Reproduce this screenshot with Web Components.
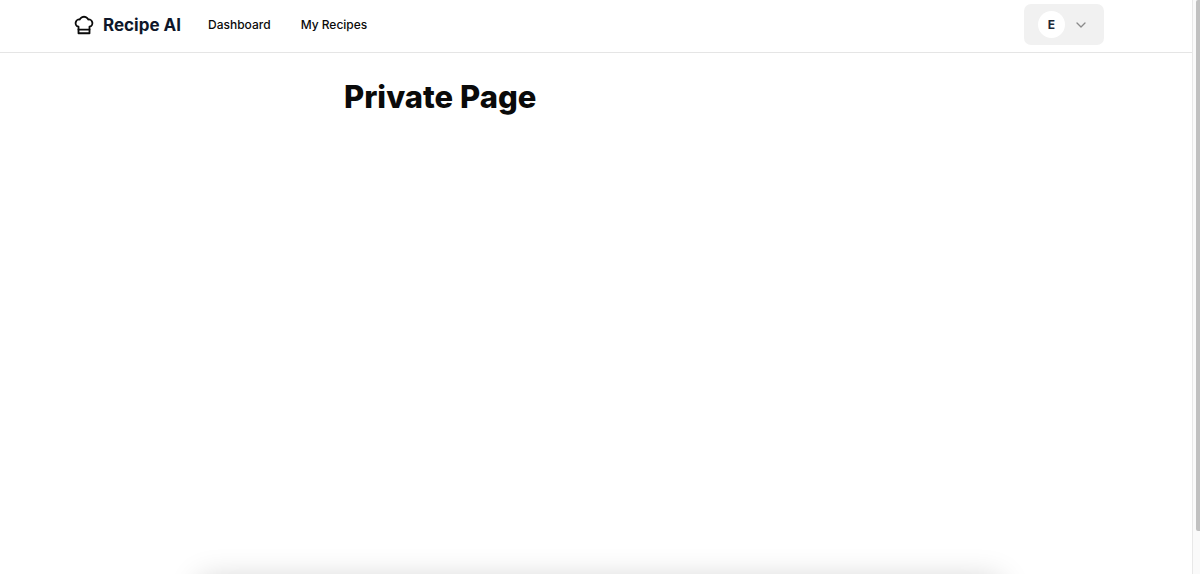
<!DOCTYPE html>
<html lang="en">
<head>
<meta charset="utf-8">
<meta name="viewport" content="width=device-width, initial-scale=1">
<title>Recipe AI</title>
<style>
body { margin: 0; background: #fff; color: #0a0a0a; font-family: Inter, "Liberation Sans", sans-serif; }
</style>
</head>
<body>
<app-shell>
  <site-header slot="header">
    <brand-link slot="brand">Recipe AI</brand-link>
    <nav-link to="#dashboard">Dashboard</nav-link>
    <nav-link to="#recipes">My Recipes</nav-link>
    <user-menu slot="account" initial="E"></user-menu>
  </site-header>
  <page-title>Private Page</page-title>
</app-shell>
<script>
const define = (name, html, setup) => {
  const template = document.createElement('template');
  template.innerHTML = html;
  customElements.define(name, class extends HTMLElement {
    constructor() {
      super();
      this.attachShadow({ mode: 'open' }).append(template.content.cloneNode(true));
    }
    connectedCallback() { if (setup) setup(this, this.shadowRoot); }
  });
};

define('app-shell', `
<style>
:host { display: flex; height: 100vh; overflow: hidden; }
.page { flex: 1; min-width: 0; display: flex; flex-direction: column; }
main { flex: 1; padding: 24px; }
.dock { flex: none; height: 40px; margin: 0 192px 0 200px; margin-bottom: -46px; box-shadow: 0 0 32px rgba(0,0,0,.2); }
</style>
<div class="page">
  <slot name="header"></slot>
  <main><slot></slot></main>
  <div class="dock"></div>
</div>
<scroll-rail></scroll-rail>`);

define('scroll-rail', `
<style>
:host { display: flex; justify-content: flex-end; box-sizing: border-box; flex: none; width: 8px; border-left: 1px solid #e8e8e8; background: #fafafa; }
.thumb { width: 4px; height: 92.5%; background: #c1c1c1; border-radius: 2px 0 0 2px; }
</style>
<div class="thumb"></div>`);

define('site-header', `
<style>
:host { display: block; border-bottom: 1px solid #e5e5e5; }
header { display: flex; align-items: center; padding: 4px 88px 7px 73px; }
nav { display: flex; gap: 30px; margin-left: 27px; }
.account { margin-left: auto; }
</style>
<header>
  <slot name="brand"></slot>
  <nav aria-label="Main"><slot></slot></nav>
  <div class="account"><slot name="account"></slot></div>
</header>`);

define('brand-link', `
<style>
:host { display: block; }
a { display: flex; align-items: center; gap: 8px; color: #0f172a; font-size: 17px; line-height: 26px; font-weight: 700; text-decoration: none; }
svg { display: block; width: 22px; height: 22px; color: #0a0a0a; }
</style>
<a href="#home">
  <svg viewBox="0 0 24 24" fill="none" stroke="currentColor" stroke-width="2" stroke-linecap="round" stroke-linejoin="round" aria-hidden="true">
    <path d="M6 13.87A4 4 0 0 1 7.41 6a5.11 5.11 0 0 1 1.05-1.54 5 5 0 0 1 7.08 0A5.11 5.11 0 0 1 16.59 6 4 4 0 0 1 18 13.87V21H6Z"/>
    <path d="M6 17h12"/>
  </svg>
  <slot></slot>
</a>`);

define('nav-link', `
<style>
:host { display: block; }
a { display: block; color: #0a0a0a; font-size: 12px; line-height: 20px; font-weight: 500; text-decoration: none; }
</style>
<a><slot></slot></a>`, (el, root) => { root.querySelector('a').href = el.getAttribute('to'); });

define('user-menu', `
<style>
:host { display: block; }
button { display: flex; align-items: center; gap: 10px; margin: 0; padding: 7px 17px 7px 14px; border: 0; border-radius: 7px; background: #f1f1f1; color: #1f2937; font: inherit; cursor: pointer; }
.avatar { display: grid; place-items: center; width: 27px; height: 27px; border-radius: 50%; background: #fff; font-size: 12px; line-height: 20px; font-weight: 700; }
svg { display: block; width: 12px; height: 12px; color: #8a8a8a; }
</style>
<button type="button" aria-haspopup="menu" aria-label="Account menu">
  <span class="avatar"></span>
  <svg viewBox="0 0 12 12" fill="none" stroke="currentColor" stroke-width="1.3" stroke-linecap="round" stroke-linejoin="round" aria-hidden="true"><path d="M2 4l4 4 4-4"/></svg>
</button>`, (el, root) => { root.querySelector('.avatar').textContent = el.getAttribute('initial'); });

define('page-title', `
<style>
:host { display: block; max-width: 504px; margin: 0 auto; }
h1 { margin: 0; font-size: 31px; line-height: 40px; font-weight: 800; }
</style>
<h1><slot></slot></h1>`);
</script>
</body>
</html>
